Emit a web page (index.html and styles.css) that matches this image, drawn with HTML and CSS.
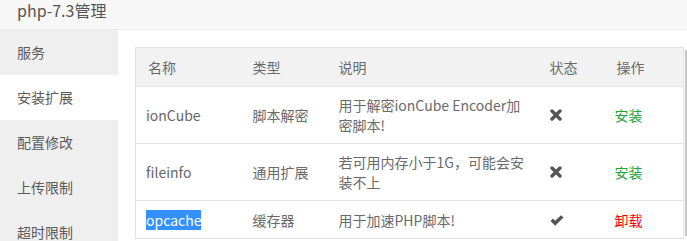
FILE: index.html
```html
<!DOCTYPE html>
<html lang="zh-CN">
<head>
<meta charset="utf-8">
<title>php-7.3管理</title>
<link rel="stylesheet" href="styles.css">
</head>
<body>
<div class="title">php-7.3管理</div>
<div class="layout">
  <ul class="side">
    <li class="item">服务</li>
    <li class="item active">安装扩展</li>
    <li class="item">配置修改</li>
    <li class="item">上传限制</li>
    <li class="item">超时限制</li>
  </ul>
  <div class="main">
    <table class="grid">
      <colgroup>
        <col class="c1"><col class="c2"><col class="c3"><col class="c4"><col class="c5">
      </colgroup>
      <thead>
        <tr><th>名称</th><th>类型</th><th>说明</th><th>状态</th><th>操作</th></tr>
      </thead>
      <tbody>
        <tr>
          <td class="name">ionCube</td>
          <td>脚本解密</td>
          <td>用于解密ionCube Encoder加密脚本!</td>
          <td><svg class="ico" width="12" height="12" viewBox="0 0 12 12"><path d="M2 2 L10 10 M10 2 L2 10" stroke="#555" stroke-width="3.4" stroke-linecap="round" fill="none"/></svg></td>
          <td><a class="act ok">安装</a></td>
        </tr>
        <tr>
          <td class="name">fileinfo</td>
          <td>通用扩展</td>
          <td>若可用内存小于1G，可能会安装不上</td>
          <td><svg class="ico" width="12" height="12" viewBox="0 0 12 12"><path d="M2 2 L10 10 M10 2 L2 10" stroke="#555" stroke-width="3.4" stroke-linecap="round" fill="none"/></svg></td>
          <td><a class="act ok">安装</a></td>
        </tr>
        <tr class="short">
          <td class="name"><span class="sel">opcache</span></td>
          <td>缓存器</td>
          <td>用于加速PHP脚本!</td>
          <td><svg class="ico" width="14" height="11" viewBox="0 0 14 11"><path d="M0.5 6 L3 3.6 L5.2 5.8 L11 0.2 L13.5 2.6 L5.2 10.8 Z" fill="#555"/></svg></td>
          <td><a class="act del">卸载</a></td>
        </tr>
      </tbody>
    </table>
  </div>
</div>
<div class="scroll"></div>
</body>
</html>
```
FILE: styles.css
```css
html, body {
  margin: 0;
  padding: 0;
  background: #fff;
  font-family: "Noto Sans CJK SC", "Noto Sans", sans-serif;
  overflow: hidden;
}
.title {
  height: 30px;
  box-sizing: border-box;
  background: #f7f7f7;
  border-bottom: 1px solid #ececec;
  color: #555;
  font-size: 16px;
  line-height: 18px;
  padding: 1px 0 0 17px;
}
.layout {
  display: flex;
}
.side {
  list-style: none;
  margin: 0;
  padding: 0;
  width: 118px;
  flex: none;
  background: #efefef;
}
.item {
  height: 45px;
  line-height: 45px;
  padding-left: 17px;
  font-size: 14px;
  color: #5a5a5a;
}
.item.active {
  background: #fff;
}
.main {
  flex: 1;
  padding: 17px 0 0 17px;
}
.grid {
  border-collapse: collapse;
  width: 548px;
  table-layout: fixed;
  font-size: 14px;
  color: #6a6a6a;
}
.c1 { width: 105px; }
.c2 { width: 86px; }
.c3 { width: 211px; }
.c4 { width: 67px; }
.c5 { width: 79px; }
.grid th, .grid td {
  border-top: 1px solid #e2e2e2;
  border-bottom: 1px solid #e2e2e2;
  text-align: left;
  font-weight: normal;
  line-height: 20px;
  vertical-align: middle;
}
.grid th:first-child, .grid td:first-child { border-left: 1px solid #e2e2e2; }
.grid th:last-child, .grid td:last-child { border-right: 1px solid #e2e2e2; }
.grid th {
  background: #f2f2f2;
  padding: 9px 12px;
}
.grid td {
  padding: 8px 12px;
}
.grid tr.short td {
  padding-top: 9px;
  padding-bottom: 8px;
}
.grid td.name {
  padding-left: 10px;
  color: #666;
}
.sel {
  background: #3390ff;
  color: #fff;
}
.ico {
  display: block;
}
.act {
  display: inline-block;
  margin-left: -2px;
  text-decoration: none;
  font-size: 14px;
}
.act.ok { color: #20a53a; }
.act.del { color: #ff0000; }
.scroll {
  position: absolute;
  left: 685px;
  top: 50px;
  width: 2px;
  height: 186px;
  background: #c4c4c4;
}
```
